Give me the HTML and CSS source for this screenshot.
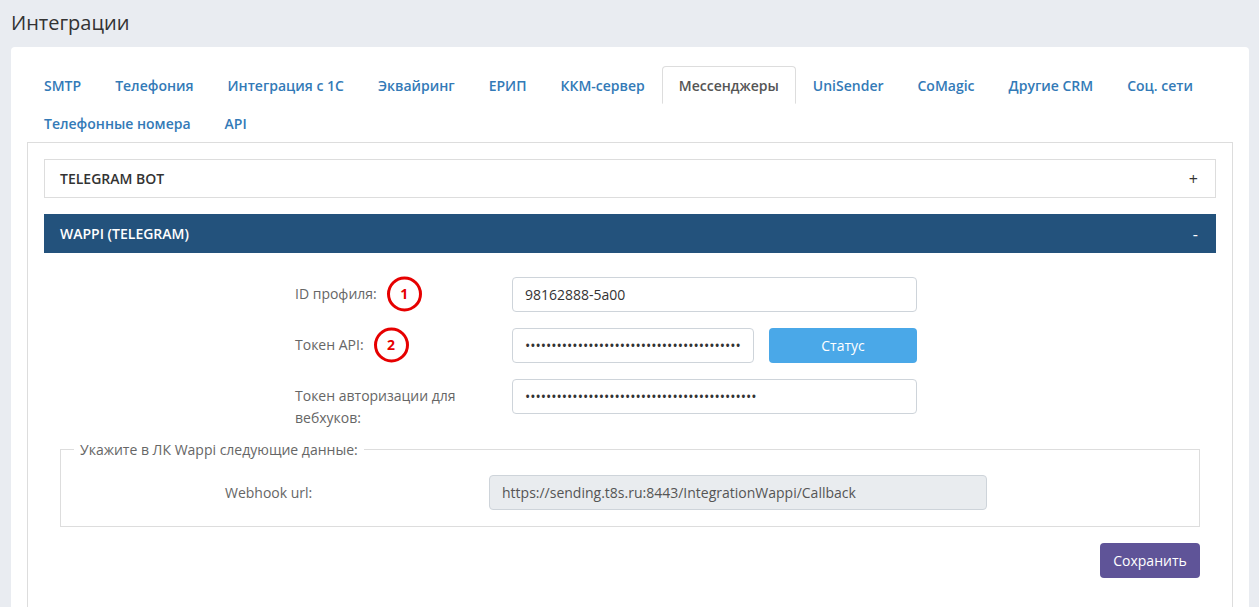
FILE: index.html
```html
<!DOCTYPE html>
<html lang="ru">
<head>
<meta charset="utf-8">
<title>Интеграции</title>
<link rel="stylesheet" href="styles.css">
</head>
<body>
<div class="page">
  <h1 class="page-title">Интеграции</h1>
  <div class="card">
    <ul class="tabs">
      <li class="tab">SMTP</li>
      <li class="tab">Телефония</li>
      <li class="tab">Интеграция с 1С</li>
      <li class="tab">Эквайринг</li>
      <li class="tab">ЕРИП</li>
      <li class="tab">ККМ-сервер</li>
      <li class="tab active">Мессенджеры</li>
      <li class="tab">UniSender</li>
      <li class="tab">CoMagic</li>
      <li class="tab">Другие CRM</li>
      <li class="tab">Соц. сети</li>
      <li class="tab">Телефонные номера</li>
      <li class="tab">API</li>
    </ul>
    <div class="tab-panel">
      <div class="acc-head">
        <span>Telegram Bot</span><span class="acc-sign">+</span>
      </div>
      <div class="acc-head open">
        <span>Wappi (Telegram)</span><span class="acc-sign">-</span>
      </div>
      <div class="acc-body">
        <div class="form-row">
          <label class="form-label"><span class="lbl">ID профиля:<span class="mark">1</span></span></label>
          <div class="form-ctrl">
            <input class="input" type="text" value="98162888-5a00">
          </div>
        </div>
        <div class="form-row">
          <label class="form-label"><span class="lbl">Токен API:<span class="mark">2</span></span></label>
          <div class="form-ctrl split">
            <input class="input short" type="password" value="aaaaaaaaaaaaaaaaaaaaaaaaaaaaaaaaaaaaaaaaaaaaaaaaaaaaaa">
            <button class="btn-status" type="button">Статус</button>
          </div>
        </div>
        <div class="form-row last">
          <label class="form-label"><span class="lbl">Токен авторизации для вебхуков:</span></label>
          <div class="form-ctrl">
            <input class="input" type="password" value="aaaaaaaaaaaaaaaaaaaaaaaaaaaaaaaaaaaaaaaaaaaa">
          </div>
        </div>
        <fieldset class="fs">
          <legend class="fs-legend">Укажите в ЛК Wappi следующие данные:</legend>
          <div class="fs-row">
            <span class="fs-label">Webhook url:</span>
            <input class="input readonly" type="text" readonly value="https://sending.t8s.ru:8443/IntegrationWappi/Callback">
          </div>
        </fieldset>
        <div class="actions">
          <button class="btn-save" type="button">Сохранить</button>
        </div>
      </div>
    </div>
  </div>
</div>
</body>
</html>
```
FILE: styles.css
```css
* { box-sizing: border-box; }
html, body { margin: 0; padding: 0; }
body {
  background: #e9ecf1;
  font-family: "Open Sans", "Noto Sans", sans-serif;
  color: #333;
  font-size: 14px;
}
.page { padding: 9px 10px 0 11px; }
.page-title {
  margin: 0 0 11px;
  font-size: 20px;
  font-weight: 400;
  line-height: 27px;
  color: #333;
}
.card {
  background: #fff;
  border-radius: 4px;
  padding: 19px 16px 20px 16px;
  min-height: 600px;
}
.tabs {
  list-style: none;
  margin: 0;
  padding: 0;
  display: flex;
  flex-wrap: wrap;
}
.tab {
  padding: 9px 16px 7px;
  border: 1px solid transparent;
  border-radius: 4px 4px 0 0;
  font-weight: 600;
  font-size: 14px;
  line-height: 20px;
  color: #337ab7;
  white-space: nowrap;
}
.tab.active {
  color: #555;
  border-color: #ddd #ddd transparent;
}
.tab-panel {
  border: 1px solid #ddd;
  padding: 16px 16px 40px;
}
.acc-head {
  display: flex;
  justify-content: space-between;
  align-items: center;
  height: 39px;
  padding: 0 17px 0 15px;
  border: 1px solid #ddd;
  font-size: 14px;
  font-weight: 600;
  text-transform: uppercase;
  color: #333;
  margin-bottom: 16px;
}
.acc-head.open {
  background: #23527c;
  border-color: #23527c;
  color: #fff;
  margin-bottom: 0;
}
.acc-sign { font-size: 16px; font-weight: 400; }
.acc-body { padding: 24px 16px 0; }
.form-row {
  display: flex;
  margin-bottom: 16px;
  padding-left: 235px;
}
.form-row.last { margin-bottom: 11px; }
.form-label {
  width: 185px;
  margin-right: 32px;
  padding-top: 6px;
  font-size: 14px;
  line-height: 22px;
  color: #666;
}
.lbl { position: relative; }
.mark {
  position: absolute;
  top: 50%;
  left: calc(100% + 10px);
  transform: translateY(-50%);
  width: 35px;
  height: 35px;
  border: 3px solid #e60000;
  border-radius: 50%;
  display: flex;
  align-items: center;
  justify-content: center;
  color: #e60000;
  font-weight: 700;
  font-size: 14px;
  line-height: 1;
}
.form-ctrl { width: 405px; }
.form-ctrl.split { display: flex; gap: 15px; }
.input {
  width: 100%;
  height: 35px;
  border: 1px solid #ced4da;
  border-radius: 4px;
  padding: 0 12px;
  font-family: "Open Sans", "Noto Sans", sans-serif;
  font-size: 14px;
  color: #333;
  background: #fff;
  outline: none;
}
.input.short { width: 242px; flex: none; }
.btn-status {
  flex: none;
  width: 148px;
  height: 35px;
  border: none;
  border-radius: 4px;
  background: #4aa8e8;
  color: #fff;
  font-family: "Open Sans", "Noto Sans", sans-serif;
  font-size: 14px;
}
.fs {
  margin: 0;
  border: 1px solid #ddd;
  padding: 16px 0 16px;
  min-width: 0;
}
.fs-legend {
  margin-left: 13px;
  padding: 0 6px;
  font-size: 14px;
  color: #666;
}
.fs-row {
  display: flex;
  align-items: center;
}
.fs-label {
  margin-left: 164px;
  width: 264px;
  color: #666;
  font-size: 14px;
}
.input.readonly {
  width: 498px;
  background: #e9ecef;
  color: #555;
}
.actions {
  display: flex;
  justify-content: flex-end;
  margin-top: 16px;
}
.btn-save {
  width: 100px;
  height: 35px;
  border: none;
  border-radius: 4px;
  background: #5f5498;
  color: #fff;
  font-family: "Open Sans", "Noto Sans", sans-serif;
  font-size: 14px;
}
```
